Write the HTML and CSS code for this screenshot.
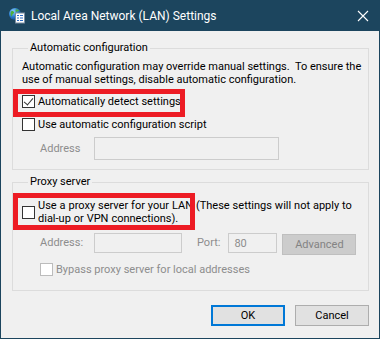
FILE: index.html
```html
<!DOCTYPE html>
<html lang="en">
<head>
    <meta charset="UTF-8">
    <meta name="viewport" content="width=device-width, initial-scale=1.0">
    <title>Local Area Network (LAN) Settings</title>
    <link rel="stylesheet" href="styles.css">
</head>
<body>
    <div class="window">
        <div class="titlebar">
            <svg class="app-icon" width="18" height="18" viewBox="0 0 18 18">
                <defs>
                    <radialGradient id="globe" cx="35%" cy="30%" r="70%">
                        <stop offset="0" stop-color="#8fd0ff"/>
                        <stop offset="0.6" stop-color="#2a7fd0"/>
                        <stop offset="1" stop-color="#134f93"/>
                    </radialGradient>
                </defs>
                <circle cx="7" cy="7" r="6" fill="url(#globe)"/>
                <path d="M3 4.5c1.2-.8 2.4-.6 3 .4.5 1-.6 1.6-1.4 2.4-.6.7-.2 1.8-1 2.2C2.6 8.5 2.3 6 3 4.5z" fill="#4caf3c"/>
                <path d="M8 2.2c1.5 0 2.8.8 3.4 1.8-.9.3-1.6 0-2.2.6-.5.5-1.5.3-1.7-.4-.2-.8 0-1.5.5-2z" fill="#4caf3c"/>
                <rect x="7.5" y="6" width="9" height="10" fill="#ffffff" stroke="#7a8da0" stroke-width="1"/>
                <rect x="9" y="8" width="2" height="1" fill="#2b6cc4"/>
                <rect x="12" y="8" width="3" height="1" fill="#2b6cc4"/>
                <rect x="9" y="10.5" width="2" height="1" fill="#2b6cc4"/>
                <rect x="12" y="10.5" width="3" height="1" fill="#2b6cc4"/>
                <rect x="9" y="13" width="2" height="1" fill="#2b6cc4"/>
                <rect x="12" y="13" width="3" height="1" fill="#2b6cc4"/>
            </svg>
            <span class="title">Local Area Network (LAN) Settings</span>
            <svg class="close" width="12" height="12" viewBox="0 0 12 12">
                <path d="M1 1L11 11M11 1L1 11" stroke="#ffffff" stroke-width="1.1"/>
            </svg>
        </div>

        <div class="content">
            <fieldset class="group">
                <legend>Automatic configuration</legend>
                <p class="desc">Automatic configuration may override manual settings.&nbsp; To ensure the<br>use of manual settings, disable automatic configuration.</p>
                <div class="check-row first">
                    <label class="hl hl-detect"><span class="box checked"></span>Automatically detect settings</label>
                </div>
                <div class="check-row">
                    <label><span class="box"></span>Use automatic configuration script</label>
                </div>
                <div class="field-row script-row">
                    <span class="field-label disabled">Address</span>
                    <span class="input script-input"></span>
                </div>
            </fieldset>

            <fieldset class="group">
                <legend>Proxy server</legend>
                <div class="proxy-row hl hl-proxy">
                    <span class="box"></span>
                    <span class="proxy-text">Use a proxy server for your LAN&nbsp;(These settings will not apply to<br>dial-up or VPN connections).</span>
                </div>
                <div class="field-row proxy-fields">
                    <span class="field-label disabled">Address:</span>
                    <span class="input addr-input"></span>
                    <span class="field-label disabled port-label">Port:</span>
                    <span class="input port-input">80</span>
                    <span class="btn btn-disabled">Advanced</span>
                </div>
                <div class="check-row bypass">
                    <label class="disabled"><span class="box box-disabled"></span>Bypass proxy server for local addresses</label>
                </div>
            </fieldset>

            <div class="actions">
                <button class="btn btn-default">OK</button>
                <button class="btn">Cancel</button>
            </div>
        </div>
    </div>
</body>
</html>
```

FILE: styles.css
```css
body {
    margin: 0;
    font-family: Roboto, "Liberation Sans", sans-serif;
    font-size: 11px;
    color: #000;
}
.window {
    width: 380px;
    height: 339px;
    box-sizing: border-box;
    background-color: #f0f0f0;
    border: 1px solid #1c455e;
    border-top: none;
}
.titlebar {
    height: 31px;
    margin: 0 -1px;
    background-color: #1c455e;
    display: flex;
    align-items: center;
    color: #fff;
}
.app-icon {
    margin-left: 8px;
    margin-top: 1px;
}
.title {
    margin-left: 5px;
    font-size: 12px;
    flex: 1;
}
.close {
    margin-right: 11px;
}
.content {
    padding: 9px 10px 0 11px;
}
.group {
    margin: 0;
    padding: 0 0 9px 9px;
    border: 1px solid #dcdcdc;
}
.group + .group {
    margin-top: 4px;
    padding-bottom: 13px;
}
legend {
    padding: 0 2px;
    margin-left: 6px;
    line-height: 16px;
}
.desc {
    margin: 4px 0 0;
    line-height: 13px;
    white-space: nowrap;
}
.check-row {
    height: 15px;
    margin-top: 8px;
    display: flex;
    align-items: center;
}
.check-row label {
    display: flex;
    align-items: center;
    line-height: 15px;
}
.box {
    width: 13px;
    height: 13px;
    box-sizing: border-box;
    border: 1px solid #333;
    background: #fff;
    margin-right: 3px;
    flex: none;
    position: relative;
}
.box.checked::after {
    content: '';
    position: absolute;
    left: 3px;
    top: 0px;
    width: 4px;
    height: 8px;
    border-right: 1px solid #333;
    border-bottom: 1px solid #333;
    transform: rotate(40deg);
}
.box-disabled {
    border-color: #bcbcbc;
}
.disabled {
    color: #8d8d8d;
}
.field-row {
    display: flex;
    align-items: center;
}
.script-row {
    margin-top: 5px;
    padding-left: 18px;
}
.field-label {
    width: 54px;
}
.input {
    box-sizing: border-box;
    border: 1px solid #cccccc;
    background: #f0f0f0;
    padding-left: 5px;
    color: #8d8d8d;
    display: flex;
    align-items: center;
}
.script-input {
    width: 185px;
    height: 23px;
}
.proxy-row {
    margin-top: 9px;
    display: flex;
    align-items: center;
}
.proxy-text {
    line-height: 13px;
    white-space: nowrap;
    word-spacing: 0.2px;
}
.proxy-fields {
    height: 20px;
    margin-top: 8px;
    padding-left: 18px;
    align-items: flex-start;
}
.proxy-fields .field-label {
    line-height: 20px;
}
.addr-input {
    width: 88px;
    height: 20px;
}
.port-label {
    width: auto;
    margin-left: 15px;
    margin-right: 8px;
}
.port-input {
    width: 49px;
    height: 20px;
}
.btn {
    font-family: inherit;
    font-size: 11px;
    box-sizing: border-box;
    width: 74px;
    height: 21px;
    border: 1px solid #adadad;
    background-color: #e1e1e1;
    color: #000;
    padding: 0;
    display: inline-flex;
    align-items: center;
    justify-content: center;
}
.btn-disabled {
    margin-left: 5px;
    margin-top: 1px;
    background-color: #cccccc;
    border-color: #bfbfbf;
    color: #838383;
}
.bypass {
    margin-top: 9px;
    padding-left: 18px;
}
.actions {
    margin-top: 14px;
    display: flex;
    justify-content: flex-end;
    gap: 10px;
}
.btn-default {
    border: 2px solid #0078d7;
}
.hl {
    position: relative;
}
.hl::before {
    content: '';
    position: absolute;
    box-sizing: border-box;
    border: 5px solid #ed1c24;
    pointer-events: none;
}
.hl-detect::before {
    left: -9px;
    top: -5px;
    width: 172px;
    height: 28px;
}
.hl-proxy::before {
    left: -9px;
    top: -6px;
    width: 182px;
    height: 37px;
}
```
